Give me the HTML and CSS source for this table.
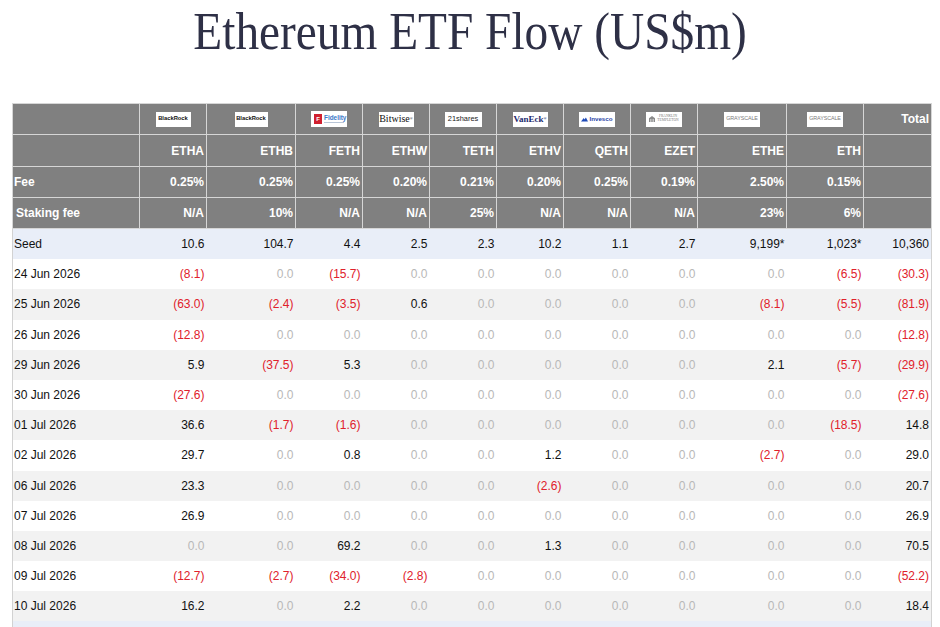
FILE: index.html
```html
<!DOCTYPE html>
<html lang="en">
<head>
<meta charset="utf-8">
<title>Ethereum ETF Flow (US$m)</title>
<link rel="stylesheet" href="styles.css">
</head>
<body>
<h1 class="title"><span class="title-text">Ethereum ETF Flow (US$m)</span></h1>
<div class="wrap">
<table class="flow">
<colgroup>
<col class="c-date"><col class="c-67"><col class="c-89"><col class="c-67"><col class="c-67"><col class="c-67"><col class="c-67"><col class="c-67"><col class="c-67"><col class="c-89"><col class="c-77"><col class="c-68">
</colgroup>
<thead>
<tr class="logos">
<th></th>
<th class="lc"><span class="logo br">BlackRock</span></th>
<th class="lc"><span class="logo br br2">BlackRock</span></th>
<th class="lc"><span class="logo fid"><span class="fid-mark">F</span><span class="fid-txt">Fidelity<span class="fid-tag"></span></span></span></th>
<th class="lc"><span class="logo bw">Bitwise<sup>®</sup></span></th>
<th class="lc"><span class="logo s21">21shares</span></th>
<th class="lc"><span class="logo ve">VanEck<sup>®</sup></span></th>
<th class="lc"><span class="logo inv"><svg class="inv-mark" viewBox="0 0 10 6" width="7" height="5"><path d="M0 6 L4 1 L5 3 L7 0 L10 6 Z" fill="#1f4bb8"/></svg><span>Invesco</span></span></th>
<th class="lc"><span class="logo ft"><svg class="ft-mark" viewBox="0 0 8 8" width="6" height="6"><path d="M0 8 V3 L4 0 L8 3 V8 Z" fill="#8a8a8a"/><rect x="2" y="4" width="1" height="4" fill="#fff"/><rect x="5" y="4" width="1" height="4" fill="#fff"/></svg><span class="ft-txt"><span>FRANKLIN</span><span>TEMPLETON</span></span></span></th>
<th class="lc"><span class="logo gs">GRAYSCALE</span></th>
<th class="lc"><span class="logo gs">GRAYSCALE</span></th>
<th>Total</th>
</tr>
<tr class="tick">
<th></th><th>ETHA</th><th>ETHB</th><th>FETH</th><th>ETHW</th><th>TETH</th><th>ETHV</th><th>QETH</th><th>EZET</th><th>ETHE</th><th>ETH</th><th></th>
</tr>
<tr>
<th class="lbl">Fee</th><th>0.25%</th><th>0.25%</th><th>0.25%</th><th>0.20%</th><th>0.21%</th><th>0.20%</th><th>0.25%</th><th>0.19%</th><th>2.50%</th><th>0.15%</th><th></th>
</tr>
<tr>
<th class="lbl stk">Staking fee</th><th>N/A</th><th>10%</th><th>N/A</th><th>N/A</th><th>25%</th><th>N/A</th><th>N/A</th><th>N/A</th><th>23%</th><th>6%</th><th></th>
</tr>
</thead>
<tbody>
<tr class="seed"><td>Seed</td><td>10.6</td><td>104.7</td><td>4.4</td><td>2.5</td><td>2.3</td><td>10.2</td><td>1.1</td><td>2.7</td><td>9,199*</td><td>1,023*</td><td>10,360</td></tr>
<tr><td>24 Jun 2026</td><td class="neg">(8.1)</td><td class="z">0.0</td><td class="neg">(15.7)</td><td class="z">0.0</td><td class="z">0.0</td><td class="z">0.0</td><td class="z">0.0</td><td class="z">0.0</td><td class="z">0.0</td><td class="neg">(6.5)</td><td class="neg">(30.3)</td></tr>
<tr class="alt"><td>25 Jun 2026</td><td class="neg">(63.0)</td><td class="neg">(2.4)</td><td class="neg">(3.5)</td><td>0.6</td><td class="z">0.0</td><td class="z">0.0</td><td class="z">0.0</td><td class="z">0.0</td><td class="neg">(8.1)</td><td class="neg">(5.5)</td><td class="neg">(81.9)</td></tr>
<tr><td>26 Jun 2026</td><td class="neg">(12.8)</td><td class="z">0.0</td><td class="z">0.0</td><td class="z">0.0</td><td class="z">0.0</td><td class="z">0.0</td><td class="z">0.0</td><td class="z">0.0</td><td class="z">0.0</td><td class="z">0.0</td><td class="neg">(12.8)</td></tr>
<tr class="alt"><td>29 Jun 2026</td><td>5.9</td><td class="neg">(37.5)</td><td>5.3</td><td class="z">0.0</td><td class="z">0.0</td><td class="z">0.0</td><td class="z">0.0</td><td class="z">0.0</td><td>2.1</td><td class="neg">(5.7)</td><td class="neg">(29.9)</td></tr>
<tr><td>30 Jun 2026</td><td class="neg">(27.6)</td><td class="z">0.0</td><td class="z">0.0</td><td class="z">0.0</td><td class="z">0.0</td><td class="z">0.0</td><td class="z">0.0</td><td class="z">0.0</td><td class="z">0.0</td><td class="z">0.0</td><td class="neg">(27.6)</td></tr>
<tr class="alt"><td>01 Jul 2026</td><td>36.6</td><td class="neg">(1.7)</td><td class="neg">(1.6)</td><td class="z">0.0</td><td class="z">0.0</td><td class="z">0.0</td><td class="z">0.0</td><td class="z">0.0</td><td class="z">0.0</td><td class="neg">(18.5)</td><td>14.8</td></tr>
<tr><td>02 Jul 2026</td><td>29.7</td><td class="z">0.0</td><td>0.8</td><td class="z">0.0</td><td class="z">0.0</td><td>1.2</td><td class="z">0.0</td><td class="z">0.0</td><td class="neg">(2.7)</td><td class="z">0.0</td><td>29.0</td></tr>
<tr class="alt"><td>06 Jul 2026</td><td>23.3</td><td class="z">0.0</td><td class="z">0.0</td><td class="z">0.0</td><td class="z">0.0</td><td class="neg">(2.6)</td><td class="z">0.0</td><td class="z">0.0</td><td class="z">0.0</td><td class="z">0.0</td><td>20.7</td></tr>
<tr><td>07 Jul 2026</td><td>26.9</td><td class="z">0.0</td><td class="z">0.0</td><td class="z">0.0</td><td class="z">0.0</td><td class="z">0.0</td><td class="z">0.0</td><td class="z">0.0</td><td class="z">0.0</td><td class="z">0.0</td><td>26.9</td></tr>
<tr class="alt"><td>08 Jul 2026</td><td class="z">0.0</td><td class="z">0.0</td><td>69.2</td><td class="z">0.0</td><td class="z">0.0</td><td>1.3</td><td class="z">0.0</td><td class="z">0.0</td><td class="z">0.0</td><td class="z">0.0</td><td>70.5</td></tr>
<tr><td>09 Jul 2026</td><td class="neg">(12.7)</td><td class="neg">(2.7)</td><td class="neg">(34.0)</td><td class="neg">(2.8)</td><td class="z">0.0</td><td class="z">0.0</td><td class="z">0.0</td><td class="z">0.0</td><td class="z">0.0</td><td class="z">0.0</td><td class="neg">(52.2)</td></tr>
<tr class="alt"><td>10 Jul 2026</td><td>16.2</td><td class="z">0.0</td><td>2.2</td><td class="z">0.0</td><td class="z">0.0</td><td class="z">0.0</td><td class="z">0.0</td><td class="z">0.0</td><td class="z">0.0</td><td class="z">0.0</td><td>18.4</td></tr>
<tr class="seed"><td></td><td></td><td></td><td></td><td></td><td></td><td></td><td></td><td></td><td></td><td></td><td></td></tr>
</tbody>
</table>
</div>
</body>
</html>
```
FILE: styles.css
```css
html, body {
  margin: 0;
  padding: 0;
  background: #ffffff;
}

body {
  font-family: "Liberation Sans", Arial, sans-serif;
  color: #000;
}

.title {
  margin: 2px 0 41px;
  text-align: center;
  font-family: "Liberation Serif", "Times New Roman", serif;
  font-weight: normal;
  font-size: 52px;
  line-height: 60px;
  color: #2e3046;
}

.title-text {
  display: inline-block;
  transform: scaleX(0.91);
}

.wrap {
  padding: 0 9px 0 12px;
}

.flow {
  border-collapse: collapse;
  table-layout: fixed;
  width: 919px;
  font-size: 12px;
}

.c-date { width: 127px; }
.c-67 { width: 67px; }
.c-89 { width: 89px; }
.c-77 { width: 77px; }
.c-68 { width: 68px; }

.flow thead th {
  background: #808080;
  color: #ffffff;
  font-weight: bold;
  font-size: 12px;
  height: 30px;
  padding: 0 2px;
  text-align: right;
  vertical-align: middle;
  border: 1px solid #d6d6d6;
  white-space: nowrap;
}

.flow thead tr.tick th {
  height: 31px;
}

.flow thead th.lbl {
  text-align: left;
  padding-left: 1px;
}

.flow thead th.stk {
  padding-left: 3px;
}

.flow thead th.lc {
  text-align: center;
  padding: 0;
}

.flow tbody td {
  height: 30.2px;
  padding: 0 2px;
  text-align: right;
  vertical-align: middle;
  white-space: nowrap;
  color: #111;
}

.flow tbody td:first-child {
  text-align: left;
  padding-left: 1px;
  border-left: 1px solid #d2d2d2;
}

.flow tbody td:last-child {
  border-right: 1px solid #d2d2d2;
}

.flow tbody tr.seed { background: #e9eef8; }
.flow tbody tr.alt { background: #f2f2f2; }

.flow tbody td.neg { color: #e0212b; }
.flow tbody td.z { color: #b8b8b8; }

/* logos */
.logo {
  display: inline-flex;
  align-items: center;
  justify-content: center;
  box-sizing: border-box;
  width: 36px;
  height: 15px;
  background: #ffffff;
  vertical-align: middle;
  overflow: hidden;
  white-space: nowrap;
  line-height: 1;
}

.br {
  width: 35px;
  font-size: 5.8px;
  font-weight: bold;
  color: #111;
}

.br2 { width: 33px; }

.fid {
  height: 16px;
  gap: 2px;
  justify-content: flex-start;
  padding-left: 3px;
}

.fid-mark {
  display: inline-flex;
  align-items: center;
  justify-content: center;
  width: 8px;
  height: 10px;
  background: #d0202f;
  color: #fff;
  font-size: 6px;
  font-weight: bold;
}

.fid-txt {
  display: inline-flex;
  flex-direction: column;
  font-size: 6.4px;
  font-weight: bold;
  color: #3b78c8;
}

.fid-tag {
  display: block;
  width: 20px;
  height: 1px;
  margin-top: 1px;
  background: #b9c6d8;
}

.bw {
  width: 35px;
  font-family: "Liberation Serif", "Times New Roman", serif;
  font-size: 10px;
  font-weight: normal;
  color: #111;
}

.bw sup, .ve sup {
  font-size: 4px;
  vertical-align: top;
  line-height: 1;
}

.s21 {
  width: 37px;
  font-size: 7.4px;
  font-weight: normal;
  color: #222;
}

.ve {
  width: 35px;
  font-family: "Liberation Serif", "Times New Roman", serif;
  font-size: 9px;
  font-weight: bold;
  color: #1d2a6e;
}

.inv {
  gap: 1px;
  font-size: 6.2px;
  font-weight: bold;
  color: #1f3fa6;
}

.inv-mark {
  display: block;
}

.ft {
  gap: 2px;
}

.ft-mark { display: block; }

.ft-txt {
  display: inline-flex;
  flex-direction: column;
  font-family: "Liberation Serif", "Times New Roman", serif;
  font-size: 3.6px;
  font-weight: normal;
  color: #777;
  line-height: 1.1;
}

.gs {
  font-size: 5.4px;
  font-weight: normal;
  color: #7a7a7a;
  letter-spacing: -0.1px;
}
```
